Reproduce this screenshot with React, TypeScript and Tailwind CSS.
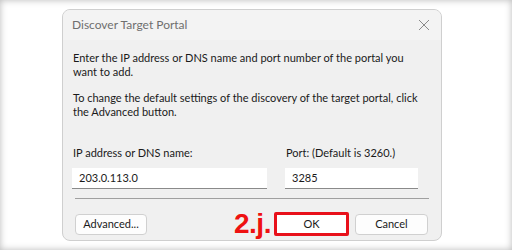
const font = { fontFamily: 'Lato, "Noto Sans", sans-serif' };

const Field = ({ label, value, width }: { label: string; value: string; width: string }) => (
  <div className="flex flex-col">
    <div className="h-[14px] leading-[14px] pl-[1px]">{label}</div>
    <div className={`${width} mt-[8px] h-[21px] bg-white border-b border-[#8a8a8a] flex items-center pl-[7px]`}>
      {value}
    </div>
  </div>
);

export default function App() {
  return (
    <div
      className="w-[512px] h-[250px] bg-white overflow-hidden shadow-[inset_0_0_7px_rgba(0,0,0,0.28)] pl-[62px] pt-[9px] text-[11px] text-[#1a1a1a] whitespace-nowrap"
      style={font}
    >
      <div className="w-[380px] h-[232px] rounded-[8px] border border-[#cfcfcf] bg-[#f0f0f0] overflow-hidden flex flex-col">
        <div className="h-[30px] shrink-0 bg-[#f3f3f3] flex items-center justify-between pl-[9px] pr-[10px]">
          <span className="text-[#6f6f6f] text-[12px]">Discover Target Portal</span>
          <svg width="12" height="12" viewBox="0 0 12 12" className="mr-[1px]">
            <path d="M1 1 L11 11 M11 1 L1 11" stroke="#8a8a8a" strokeWidth="1" />
          </svg>
        </div>
        <div className="pl-[10px] pt-[11px] leading-[14px]">
          <p>
            Enter the IP address or DNS name and port number of the portal you
            <br />
            want to add.
          </p>
          <p className="mt-[12px]">
            To change the default settings of the discovery of the target portal, click
            <br />
            the Advanced button.
          </p>
        </div>
        <div className="flex pl-[9px] mt-[27px]">
          <Field label="IP address or DNS name:" value="203.0.113.0" width="w-[195px]" />
          <div className="ml-[18px]">
            <Field label="Port: (Default is 3260.)" value="3285" width="w-[133px]" />
          </div>
        </div>
        <div className="ml-[12px] mr-[12px] mt-[9px] h-px shrink-0 bg-[#a0a0a0]" />
        <div className="flex items-center pl-[12px] mt-[11px]">
          <button className="w-[72px] h-[21px] rounded-[4px] border border-[#d0d0d0] bg-[#fdfdfd]">
            Advanced...
          </button>
          <span
            className="ml-[87px] text-[28px] font-bold text-[#ee1111] leading-none tracking-[-0.5px]"
            style={{ fontFamily: '"Liberation Sans", Arial, sans-serif' }}
          >
            2.j.
          </span>
          <div className="ml-[3px] w-[75px] h-[24px] border-[3px] border-[#e8101a] rounded-[2px] bg-white flex items-center justify-center">
            OK
          </div>
          <button className="ml-[6px] w-[73px] h-[21px] rounded-[4px] border border-[#d0d0d0] bg-[#fdfdfd]">
            Cancel
          </button>
        </div>
      </div>
    </div>
  );
}
